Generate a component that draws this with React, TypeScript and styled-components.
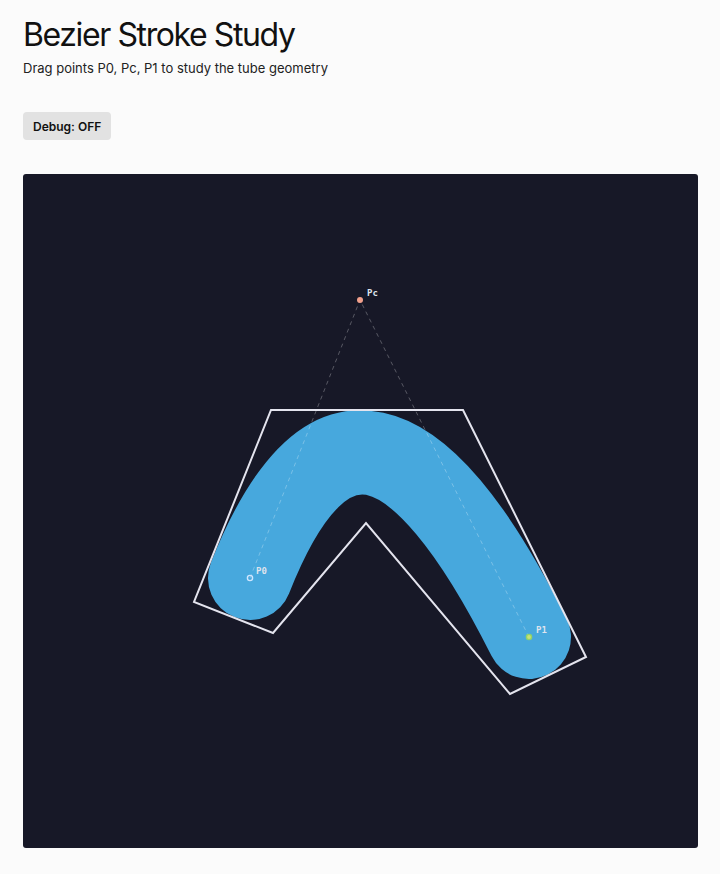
import React, { useState } from "react";
import styled, { createGlobalStyle } from "styled-components";

const GlobalStyle = createGlobalStyle`
  html, body {
    margin: 0;
    padding: 0;
    background: #fbfbfb;
  }
  body {
    font-family: Inter, "Liberation Sans", Arial, sans-serif;
    color: #111;
  }
`;

const Page = styled.div`
  padding: 15px 23px 0 23px;
  display: flex;
  flex-direction: column;
`;

const Title = styled.h1`
  margin: 0;
  font-size: 32px;
  font-weight: 400;
  letter-spacing: -1.4px;
  line-height: 40px;
`;

const Subtitle = styled.p`
  margin: 5px 0 0 0;
  font-size: 13px;
  line-height: 16px;
  color: #222;
`;

const ToggleButton = styled.button`
  align-self: flex-start;
  margin-top: 36px;
  height: 28px;
  padding: 0 10px;
  border: none;
  border-radius: 4px;
  background: #e2e2e2;
  font-family: Inter, "Liberation Sans", Arial, sans-serif;
  font-size: 12px;
  font-weight: 600;
  color: #111;
  cursor: pointer;
`;

const Canvas = styled.svg`
  display: block;
  margin-top: 34px;
  width: 675px;
  height: 674px;
  background: #171827;
  border-radius: 3px;
`;

const Label = styled.text`
  font-family: "DejaVu Sans Mono", "Liberation Mono", monospace;
  font-size: 9px;
  font-weight: 700;
  fill: #dfe3ee;
`;

type Pt = { x: number; y: number };

const P0: Pt = { x: 227, y: 404 };
const PC: Pt = { x: 337, y: 126 };
const P1: Pt = { x: 506, y: 463 };

const hull = "248,236 440,236 563,483 487,520 343,349 250,459 171,428";

export default function App() {
  const [debug, setDebug] = useState(false);

  return (
    <>
      <GlobalStyle />
      <Page>
        <Title>Bezier Stroke Study</Title>
        <Subtitle>Drag points P0, Pc, P1 to study the tube geometry</Subtitle>
        <ToggleButton onClick={() => setDebug(!debug)}>
          Debug: {debug ? "ON" : "OFF"}
        </ToggleButton>
        <Canvas viewBox="0 0 675 674">
          <path
            d={`M ${P0.x} ${P0.y} Q ${PC.x} ${PC.y} ${P1.x} ${P1.y}`}
            fill="none"
            stroke="#47a8dd"
            strokeWidth={84}
            strokeLinecap="round"
          />
          <polygon points={hull} fill="none" stroke="#e4e4ee" strokeWidth={2} strokeLinejoin="miter" />
          <polyline
            points={`${P0.x},${P0.y} ${PC.x},${PC.y} ${P1.x},${P1.y}`}
            fill="none"
            stroke="rgba(255,255,255,0.28)"
            strokeWidth={1}
            strokeDasharray="4 4"
          />
          <circle cx={PC.x} cy={PC.y} r={3} fill="#f2a08c" />
          <circle cx={P0.x} cy={P0.y} r={2.6} fill="none" stroke="#cfe6ff" strokeWidth={1.4} />
          <circle cx={P1.x} cy={P1.y} r={2.6} fill="#c8e07a" stroke="#8fd36a" strokeWidth={1.4} />
          <Label x={PC.x + 7} y={PC.y - 4}>Pc</Label>
          <Label x={P0.x + 6} y={P0.y - 4}>P0</Label>
          <Label x={P1.x + 7} y={P1.y - 4}>P1</Label>
        </Canvas>
      </Page>
    </>
  );
}
